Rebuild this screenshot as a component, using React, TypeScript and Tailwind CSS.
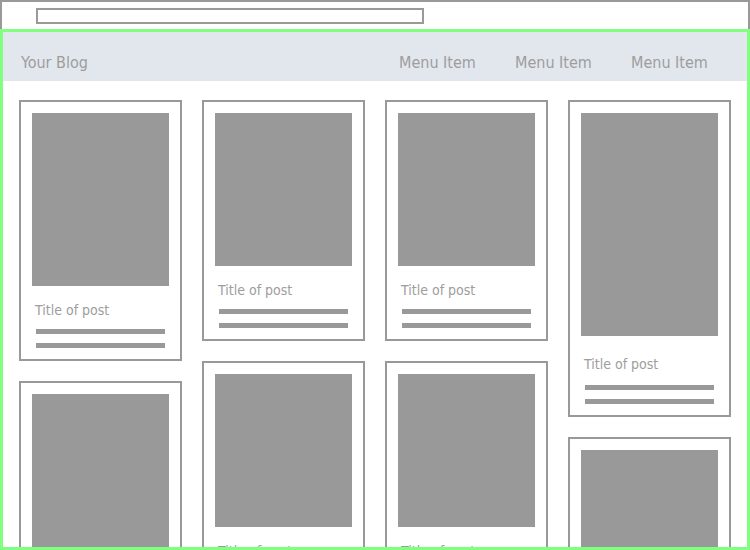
const font = { fontFamily: '"DejaVu Sans Condensed", "DejaVu Sans", sans-serif' };

interface Post {
  img: number;
  titleGap?: number;
  lineGap?: number;
}

const columns: Post[][] = [
  [{ img: 173 }, { img: 173 }],
  [{ img: 153 }, { img: 153 }],
  [{ img: 153 }, { img: 153 }],
  [{ img: 223, titleGap: 20, lineGap: 13 }, { img: 223 }],
];

function PostCard({ post }: { post: Post }) {
  return (
    <div className="border-2 border-[#999] bg-white px-[11px] pt-[11px] pb-[11px]">
      <div className="w-full bg-[#999]" style={{ height: post.img }} />
      <div
        className="px-[3px] text-[14px] leading-[16px] text-[#9d9d9d]"
        style={{ marginTop: post.titleGap ?? 16 }}
      >
        Title of post
      </div>
      <div className="mx-[4px] h-[5px] bg-[#999]" style={{ marginTop: post.lineGap ?? 11 }} />
      <div className="mx-[4px] mt-[9px] h-[5px] bg-[#999]" />
    </div>
  );
}

export default function App() {
  return (
    <div className="w-[750px] h-[550px] bg-white overflow-hidden" style={font}>
      {/* browser chrome */}
      <div className="h-[29px] border-t-2 border-x-2 border-[#999] pl-[34px] pt-[6px]">
        <div className="w-[388px] h-[16px] border-2 border-[#999]" />
      </div>

      {/* page */}
      <div className="h-[521px] border-[3px] border-[#80ff80] overflow-hidden">
        <header className="h-[49px] bg-[#e2e7ee] flex items-start justify-between pt-[22px] text-[16px] leading-[18px] text-[#9d9d9d]">
          <div className="pl-[18px]">Your Blog</div>
          <nav className="flex">
            <span className="w-[116px]">Menu Item</span>
            <span className="w-[116px]">Menu Item</span>
            <span className="w-[116px]">Menu Item</span>
          </nav>
        </header>

        <div className="grid grid-cols-4 gap-x-[20px] px-[16px] pt-[19px]">
          {columns.map((col, i) => (
            <div key={i} className="flex flex-col gap-[20px]">
              {col.map((post, j) => (
                <PostCard key={j} post={post} />
              ))}
            </div>
          ))}
        </div>
      </div>
    </div>
  );
}
